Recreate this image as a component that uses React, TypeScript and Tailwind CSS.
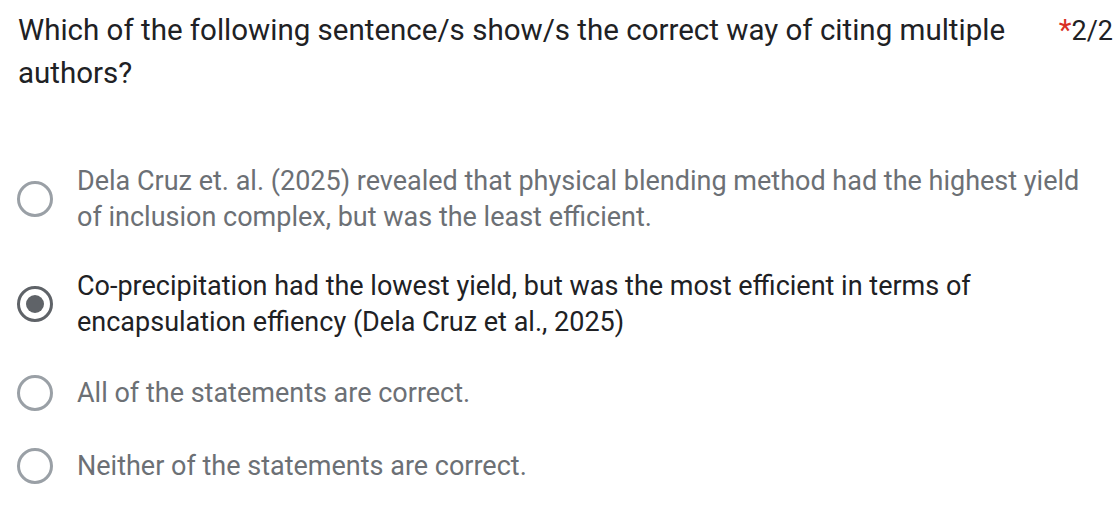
const options = [
  {
    text: 'Dela Cruz et. al. (2025) revealed that physical blending method had the highest yield of inclusion complex, but was the least efficient.',
    checked: false,
    gap: 'mt-0',
  },
  {
    text: 'Co-precipitation had the lowest yield, but was the most efficient in terms of encapsulation effiency (Dela Cruz et al., 2025)',
    checked: true,
    gap: 'mt-[32.5px]',
  },
  { text: 'All of the statements are correct.', checked: false, gap: 'mt-[35px]' },
  { text: 'Neither of the statements are correct.', checked: false, gap: 'mt-[37px]' },
];

const Radio = ({ checked }: { checked: boolean }) =>
  checked ? (
    <div className="flex h-[36px] w-[36px] shrink-0 items-center justify-center rounded-full border-[3.6px] border-[#5f6368]">
      <div className="h-[18px] w-[18px] rounded-full bg-[#5f6368]" />
    </div>
  ) : (
    <div className="h-[36px] w-[36px] shrink-0 rounded-full border-[3.6px] border-[#9aa0a6]" />
  );

export default function App() {
  return (
    <div
      className="min-h-screen w-full bg-white pt-[9px]"
      style={{ fontFamily: 'Roboto, "Noto Sans", Arial, sans-serif' }}
    >
      {/* Question header */}
      <div className="flex items-baseline pl-[18px] pr-[3px]">
        <div className="flex-1 pr-[30px] text-[29.5px] leading-[42.7px] text-[#202124]">
          Which of the following sentence/s show/s the correct way of citing multiple authors?
        </div>
        <div className="flex items-baseline">
          <span className="text-[29.5px] leading-[42.7px] text-[#d93025]">*</span>
          <span className="text-[27px] leading-[42.7px] text-[#202124]">2/2</span>
        </div>
      </div>

      {/* Choices */}
      <div className="mt-[69px] flex flex-col pl-[17px] pr-[20px]">
        {options.map((o, i) => (
          <div key={i} className={'flex items-center gap-[24px] ' + o.gap}>
            <Radio checked={o.checked} />
            <div
              className={
                'text-[27px] leading-[36px] ' +
                (o.checked ? 'text-[#202124]' : 'text-[#6c7075]')
              }
            >
              {o.text}
            </div>
          </div>
        ))}
      </div>
    </div>
  );
}
